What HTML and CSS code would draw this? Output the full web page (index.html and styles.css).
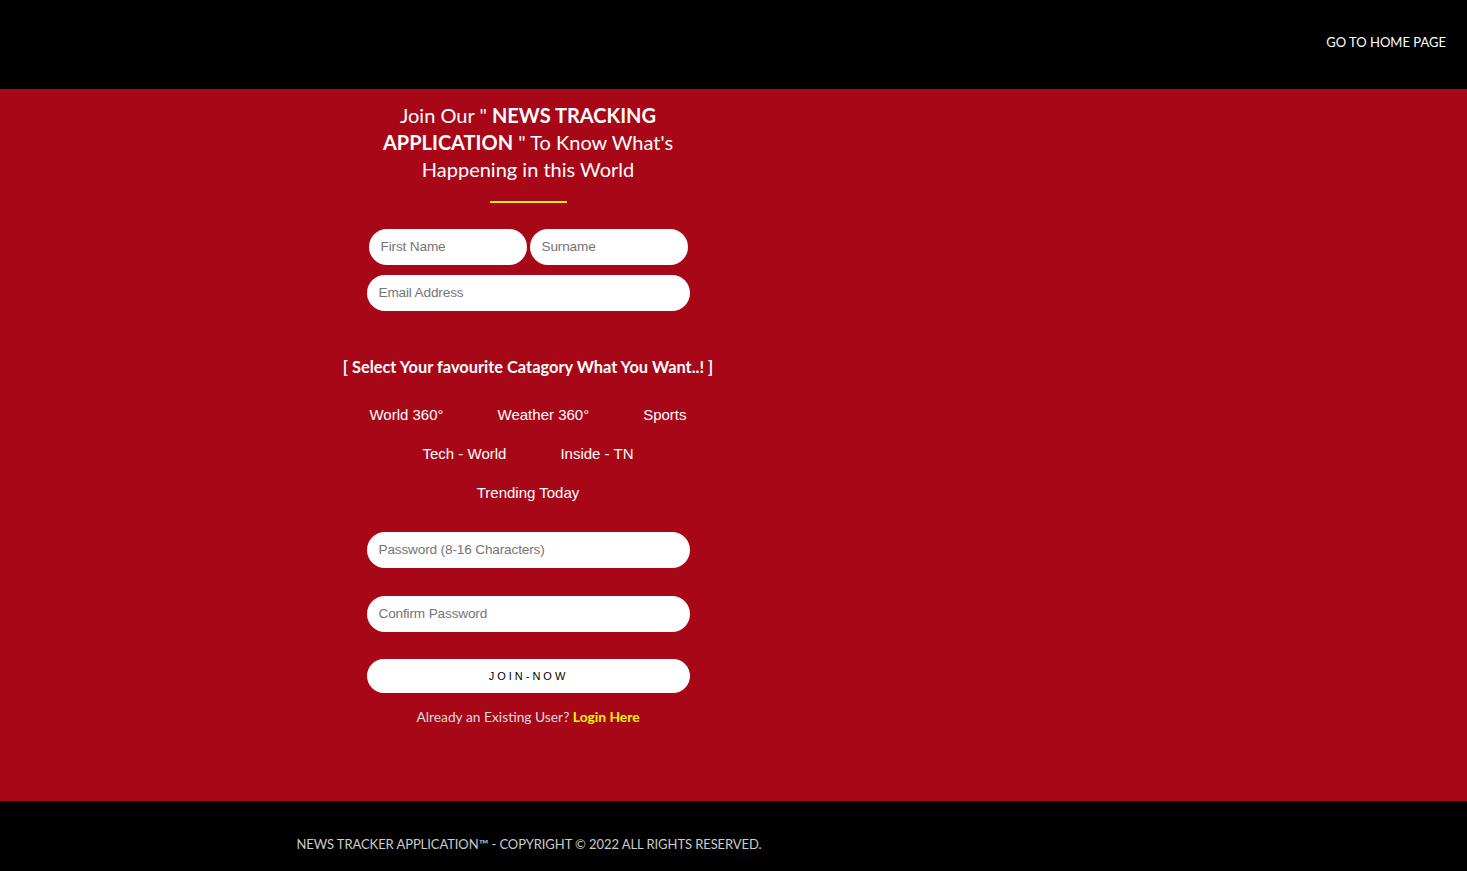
FILE: index.html
```html
<!DOCTYPE html>
<html>
<head>
<meta charset="utf-8">
<link rel="stylesheet" href="styles.css">
</head>
<body>
<header class="topbar">
  <a class="home-link" href="#">GO TO HOME PAGE</a>
</header>
<main class="main">
  <div class="column">
    <h1 class="title">Join Our " <b>NEWS TRACKING<br>APPLICATION</b> " To Know What's<br>Happening in this World</h1>
    <div class="underline"></div>
    <form class="form">
      <div class="row-two">
        <input class="field half" type="text" placeholder="First Name">
        <input class="field half" type="text" placeholder="Surname">
      </div>
      <input class="field full" type="email" placeholder="Email Address">
      <p class="cat-title">[ Select Your favourite Catagory What You Want..! ]</p>
      <div class="cats">
        <div class="cat-row"><span class="cat">World 360°</span><span class="cat">Weather 360°</span><span class="cat">Sports</span></div>
        <div class="cat-row"><span class="cat">Tech - World</span><span class="cat">Inside - TN</span></div>
        <div class="cat-row"><span class="cat">Trending Today</span></div>
      </div>
      <input class="field full pw" type="password" placeholder="Password (8-16 Characters)">
      <input class="field full cpw" type="password" placeholder="Confirm Password">
      <button class="join" type="button">JOIN-NOW</button>
      <p class="existing">Already an Existing User? <a href="#" class="login">Login Here</a></p>
    </form>
  </div>
</main>
<footer class="footer">
  <div class="column">
    <p class="copy">NEWS TRACKER APPLICATION™ - COPYRIGHT © 2022 ALL RIGHTS RESERVED.</p>
  </div>
</footer>
</body>
</html>
```

FILE: styles.css
```css
* { box-sizing: border-box; }
html, body { margin: 0; padding: 0; }
body {
  font-family: Lato, "Open Sans", sans-serif;
  background: #a80718;
  color: #fff;
}
.topbar {
  height: 89px;
  background: #000;
  display: flex;
  justify-content: flex-end;
  align-items: center;
  padding-right: 21px;
}
.home-link {
  color: #fff;
  text-decoration: none;
  font-size: 13px;
  margin-top: -6px;
}
.main {
  height: 712px;
  background: #a80718;
}
.column {
  width: 1056px;
  display: flex;
  flex-direction: column;
  align-items: center;
}
.title {
  margin: 13px 0 0;
  font-size: 20px;
  line-height: 27px;
  font-weight: 400;
  text-align: center;
}
.title b { font-weight: 700; }
.underline {
  width: 77px;
  height: 2px;
  background: #f3ef00;
  margin-top: 18px;
}
.form {
  width: 323px;
  display: flex;
  flex-direction: column;
  align-items: center;
  margin-top: 26px;
}
.row-two {
  display: flex;
  gap: 3px;
}
.field {
  height: 36px;
  border: none;
  border-radius: 18px;
  background: #fff;
  font-family: "Liberation Sans", Arial, sans-serif;
  font-size: 13.6px;
  letter-spacing: -0.15px;
  padding: 0 12px 2px;
  outline: none;
}
.field::placeholder { color: #757575; }
.half { width: 158px; }
.full { width: 323px; }
.row-two + .full { margin-top: 10px; }
.cat-title {
  margin: 46px 0 0;
  font-size: 16.4px;
  font-weight: 700;
  white-space: nowrap;
  line-height: 20px;
}
.cats {
  margin-top: 29px;
  display: flex;
  flex-direction: column;
  align-items: center;
  gap: 21px;
  font-family: "Liberation Sans", Arial, sans-serif;
  font-size: 15px;
  line-height: 18px;
}
.cat-row {
  display: flex;
  gap: 54px;
  justify-content: center;
}
.pw { margin-top: 30px; }
.cpw { margin-top: 28px; }
.join {
  margin-top: 27px;
  width: 323px;
  height: 34px;
  border: none;
  border-radius: 17px;
  background: #fff;
  color: #000;
  font-family: "Liberation Sans", Arial, sans-serif;
  font-size: 11px;
  letter-spacing: 3px;
  padding-left: 7px;
}
.existing {
  margin: 15px 0 0;
  font-size: 13.8px;
  color: #ddd;
  line-height: 17px;
}
.login {
  color: #f5f500;
  font-weight: 700;
  text-decoration: none;
}
.footer {
  height: 70px;
  background: #000;
}
.copy {
  margin: 0;
  padding-top: 35px;
  padding-left: 2px;
  font-size: 13px;
  letter-spacing: -0.08px;
  color: #ccc;
  line-height: 17px;
}
```
